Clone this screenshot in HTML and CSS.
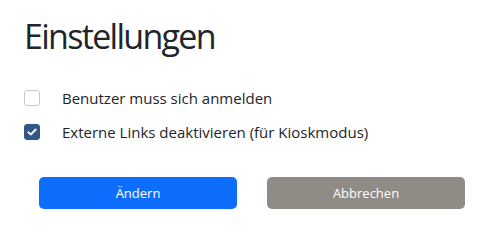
FILE: index.html
```html
<!DOCTYPE html>
<html lang="de">
<head>
    <meta charset="UTF-8">
    <title>Einstellungen</title>
    <link rel="stylesheet" href="styles.css">
</head>
<body>
    <div class="settings">
        <h1 class="settings-title">Einstellungen</h1>
        <div class="options">
            <label class="option">
                <span class="check"></span>
                <span class="option-text">Benutzer muss sich anmelden</span>
            </label>
            <label class="option">
                <span class="check checked">
                    <svg width="10" height="8" viewBox="0 0 10 8"><path d="M1.3 4.2 L3.8 6.5 L8.7 1.5" fill="none" stroke="#fff" stroke-width="1.8" stroke-linecap="round" stroke-linejoin="round"/></svg>
                </span>
                <span class="option-text">Externe Links deaktivieren (für Kioskmodus)</span>
            </label>
        </div>
        <div class="actions">
            <button class="btn primary">Ändern</button>
            <button class="btn secondary">Abbrechen</button>
        </div>
    </div>
</body>
</html>
```

FILE: styles.css
```css
* {
    margin: 0;
    padding: 0;
    box-sizing: border-box;
}

body {
    font-family: 'Open Sans', 'Noto Sans', sans-serif;
    background: #fff;
    color: #212529;
}

.settings {
    padding: 14px 0 0 24px;
}

.settings-title {
    font-size: 34px;
    font-weight: 400;
    line-height: 44px;
    letter-spacing: -1.7px;
    margin-bottom: 32px;
}

.options {
    display: flex;
    flex-direction: column;
    gap: 18px;
}

.option {
    display: flex;
    align-items: center;
    gap: 22px;
    height: 16px;
}

.check {
    width: 16px;
    height: 16px;
    border: 1px solid #c6c6c6;
    border-radius: 3px;
    display: flex;
    align-items: center;
    justify-content: center;
}

.check.checked {
    background: #2f5686;
    border-color: #2f5686;
}

.option-text {
    font-size: 15px;
}

.actions {
    display: flex;
    gap: 30px;
    padding-left: 15px;
    margin-top: 37px;
}

.btn {
    width: 198px;
    height: 32px;
    border: none;
    border-radius: 5px;
    color: #fff;
    font-family: 'Open Sans', 'Noto Sans', sans-serif;
    font-size: 13px;
}

.btn.primary {
    background: #0d6efd;
}

.btn.secondary {
    background: #8f8b85;
}
```
